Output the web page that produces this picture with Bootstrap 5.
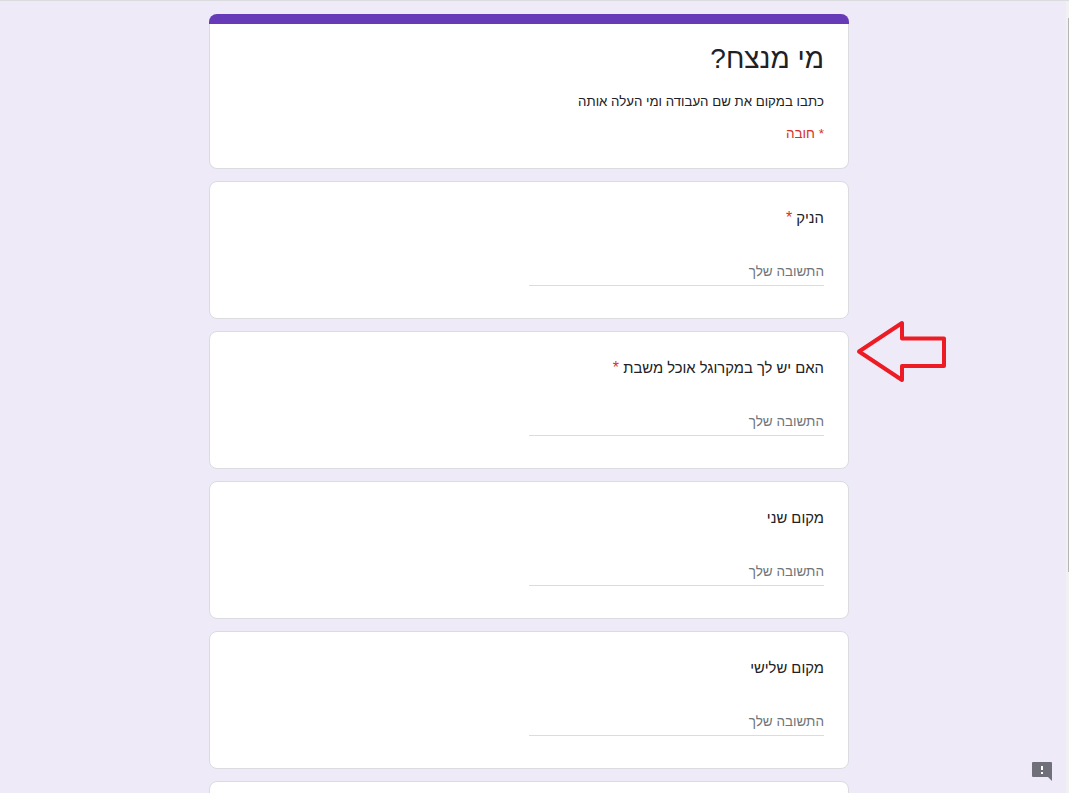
<!DOCTYPE html>
<html lang="he" dir="rtl">
<head>
    <meta charset="utf-8">
    <title>מי מנצח?</title>
    <link href="https://cdn.jsdelivr.net/npm/bootstrap@5.3.0/dist/css/bootstrap.min.css" rel="stylesheet">
    <style>
        html, body { height: 100%; overflow: hidden; }
        body { background: #eeeaf8; font-family: "Liberation Sans", Arial, sans-serif; color: #202124; border-top: 1px solid #dadce0; padding-right: 11px; }
        .form-col { width: 640px; margin: 13px auto 0; }
        .form-box { background: #fff; border: 1px solid #dadce0; border-radius: 8px; margin-bottom: 12px; padding: 24px; height: 138px; }
        .head-wrap { margin-bottom: 12px; }
        .head-stripe { background: #673ab7; height: 10px; border-radius: 8px 8px 0 0; }
        .head-body { background: #fff; height: 145px; padding: 16px 24px 0; border: 1px solid #dadce0; border-top: 0; border-radius: 0 0 8px 8px; }
        .form-title { font-size: 28px; line-height: 38px; font-weight: 400; margin: 0; }
        .form-desc { font-size: 13.25px; line-height: 20px; margin: 14px 0 0; }
        .req-note { font-size: 13.5px; line-height: 20px; color: #d93025; margin: 12px 0 0; }
        .req-star { color: #d93025; font-size: 16px; }
        .q-label { font-size: 14.8px; line-height: 24px; margin: 0; }
        .answer-line { width: 295px; height: 27px; margin-top: 29px; padding-top: 1px; font-size: 13.5px; line-height: 24px; color: #70757a; border-bottom: 1px solid #dadce0; }
        .red-arrow { position: absolute; left: 855px; top: 319px; }
        .feedback-btn { position: fixed; left: 1032px; top: 762px; }
        .scroll-track { position: fixed; top: 1px; bottom: 0; left: 1066px; width: 3px; background: #f1f1f1; }
        .scroll-thumb { position: absolute; top: 17px; left: 2px; width: 1px; height: 554px; background: #b5b5b5; }
    </style>
</head>
<body>
    <div class="form-col">
        <div class="head-wrap">
            <div class="head-stripe"></div>
            <div class="head-body">
                <h1 class="form-title">מי מנצח?</h1>
                <p class="form-desc">כתבו במקום את שם העבודה ומי העלה אותה</p>
                <p class="req-note">* חובה</p>
            </div>
        </div>
        <div class="form-box">
            <p class="q-label">הניק <span class="req-star">*</span></p>
            <div class="answer-line">התשובה שלך</div>
        </div>
        <div class="form-box">
            <p class="q-label">האם יש לך במקרוגל אוכל משבת <span class="req-star">*</span></p>
            <div class="answer-line">התשובה שלך</div>
        </div>
        <div class="form-box">
            <p class="q-label">מקום שני</p>
            <div class="answer-line">התשובה שלך</div>
        </div>
        <div class="form-box">
            <p class="q-label">מקום שלישי</p>
            <div class="answer-line">התשובה שלך</div>
        </div>
        <div class="form-box"></div>
    </div>

    <svg class="red-arrow" width="94" height="66" viewBox="855 319 94 66">
        <path d="M859 351.5 L902 323 V338.5 H944 V366 H902 V380 Z" fill="none" stroke="#ed1c24" stroke-width="4" stroke-linejoin="round"/>
    </svg>

    <svg class="feedback-btn" width="21" height="20" viewBox="0 0 21 20">
        <path d="M1 0 H19 A1 1 0 0 1 20 1 V19 L16 15 H1 A1 1 0 0 1 0 14 V1 A1 1 0 0 1 1 0 Z" fill="#70707a"/>
        <rect x="9" y="4" width="2" height="4" fill="#fff"/>
        <rect x="9" y="10" width="2" height="2" fill="#fff"/>
    </svg>

    <div class="scroll-track"><div class="scroll-thumb"></div></div>

    <script src="https://cdn.jsdelivr.net/npm/bootstrap@5.3.0/dist/js/bootstrap.bundle.min.js"></script>
</body>
</html>
